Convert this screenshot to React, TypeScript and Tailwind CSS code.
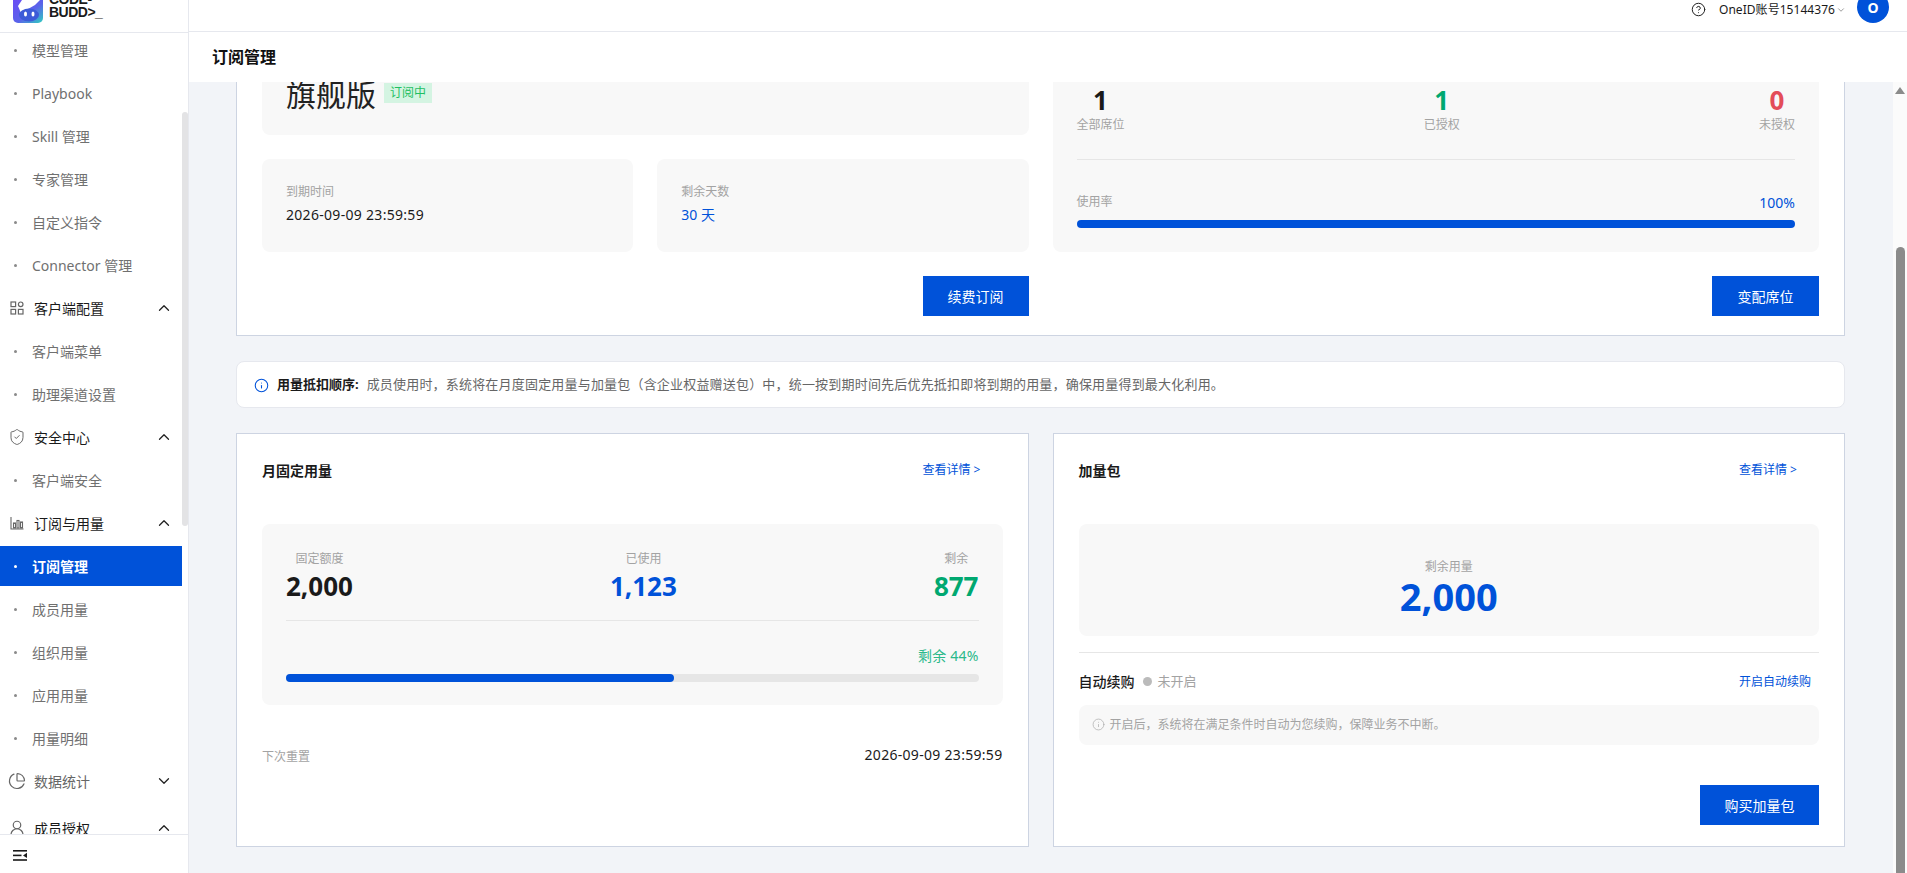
import { ChevronUp, ChevronDown, CircleHelp, Info, ShieldCheck, ChartPie, UserRound } from "lucide-react";
import type { ReactNode } from "react";

function Sub({ label, active }: { label: string; active?: boolean }) {
  return (
    <div className={`h-10 mb-[3px] flex items-center pl-[14px] text-[14px] shrink-0 ${active ? "bg-[#0052d9] text-white font-bold" : "text-[#707070]"}`}>
      <span className={`w-[3px] h-[3px] rounded-full mr-[15px] ${active ? "bg-white" : "bg-[#8a8a8a]"}`} />
      {label}
    </div>
  );
}

function Group({ icon, label, open = true, muted }: { icon: ReactNode; label: string; open?: boolean; muted?: boolean }) {
  return (
    <div className="h-10 mb-[3px] flex items-center pl-[9px] pr-[9px] text-[14px] shrink-0">
      <span className="w-[15px] h-[15px] flex items-center justify-center text-[#666] mr-[10px]">{icon}</span>
      <span className={`flex-1 ${muted ? "text-[#666]" : "text-[#1a1a1a]"}`}>{label}</span>
      {open ? <ChevronUp size={18} strokeWidth={1.7} className="text-[#222]" /> : <ChevronDown size={18} strokeWidth={1.7} className="text-[#222]" />}
    </div>
  );
}

function Panel({ className = "", children }: { className?: string; children: ReactNode }) {
  return <div className={`bg-[#f8f8f8] rounded-lg ${className}`}>{children}</div>;
}

function Primary({ label, w }: { label: string; w: string }) {
  return <button className={`h-10 ${w} bg-[#0052d9] text-white text-[14px]`}>{label}</button>;
}

function SeatStat({ value, label, color }: { value: string; label: string; color: string }) {
  return (
    <div className="flex flex-col items-center">
      <span className={`text-[26px] leading-[32px] font-bold ${color}`}>{value}</span>
      <span className="text-[12px] leading-[18px] text-[#a3a3a3] w-max">{label}</span>
    </div>
  );
}

export default function App() {
  return (
    <div className="w-[1907px] h-[873px] overflow-hidden flex bg-white font-['Noto_Sans','Noto_Sans_CJK_SC',sans-serif] text-[#1a1a1a]">
      <aside className="w-[189px] shrink-0 flex flex-col border-r border-[#e6e8ee] bg-white">
        <div className="h-[33px] shrink-0 border-b border-[#e6e8ee] overflow-hidden flex pl-[13px]">
          <svg width="30" height="23" viewBox="0 0 30 23" className="shrink-0">
            <defs>
              <linearGradient id="lg" x1="0" y1="0" x2="1" y2="1">
                <stop offset="0" stopColor="#6a4cf5" />
                <stop offset="0.55" stopColor="#5a62ea" />
                <stop offset="1" stopColor="#2fd0c0" />
              </linearGradient>
            </defs>
            <path d="M0 0H30V18a5 5 0 0 1-5 5H5a5 5 0 0 1-5-5Z" fill="url(#lg)" />
            <path d="M9 0 L27 0 L22 5 L8 13 L5 6 Z" fill="#fff" />
            <ellipse cx="16" cy="15" rx="10" ry="6.5" fill="#3d5bd8" />
            <ellipse cx="12.5" cy="14" rx="1.5" ry="2.5" fill="#fff" />
            <ellipse cx="20" cy="14" rx="1.5" ry="2.5" fill="#fff" />
          </svg>
          <div className="ml-[6px] -mt-[7px] font-['Liberation_Sans',sans-serif] font-bold text-[14px] leading-[13px] tracking-[-0.5px] text-[#1a1a1a]">
            <div>CODE-</div>
            <div>BUDD&gt;_</div>
          </div>
        </div>
        <div className="flex-1 min-h-0 flex overflow-hidden">
          <nav className="w-[182px] shrink-0 -mt-[3px] flex flex-col">
            <Sub label="模型管理" />
            <Sub label="Playbook" />
            <Sub label="Skill 管理" />
            <Sub label="专家管理" />
            <Sub label="自定义指令" />
            <Sub label="Connector 管理" />
            <Group
              label="客户端配置"
              icon={
                <svg width="14" height="14" viewBox="0 0 14 14" fill="none" stroke="currentColor" strokeWidth="1.2">
                  <rect x="1" y="1" width="4.6" height="4.6" />
                  <rect x="8.4" y="1" width="4.6" height="4.6" rx="2.3" />
                  <rect x="1" y="8.4" width="4.6" height="4.6" />
                  <rect x="8.4" y="8.4" width="4.6" height="4.6" />
                </svg>
              }
            />
            <Sub label="客户端菜单" />
            <Sub label="助理渠道设置" />
            <Group label="安全中心" icon={<ShieldCheck size={18} strokeWidth={1.3} className="shrink-0" />} />
            <Sub label="客户端安全" />
            <Group
              label="订阅与用量"
              icon={
                <svg width="14" height="14" viewBox="0 0 14 14" fill="none" stroke="currentColor" strokeWidth="1.1">
                  <path d="M1 1V13H13.5" />
                  <rect x="3.5" y="7" width="2" height="5" />
                  <rect x="7" y="4.5" width="2" height="7.5" />
                  <rect x="10.5" y="6" width="2" height="6" />
                </svg>
              }
            />
            <Sub label="订阅管理" active />
            <Sub label="成员用量" />
            <Sub label="组织用量" />
            <Sub label="应用用量" />
            <Sub label="用量明细" />
            <Group label="数据统计" open={false} muted icon={<ChartPie size={18} strokeWidth={1.6} className="shrink-0" />} />
            <div className="h-1 shrink-0" />
            <Group label="成员授权" icon={<UserRound size={18} strokeWidth={1.6} className="shrink-0" />} />
          </nav>
          <div className="w-[6px] shrink-0 flex flex-col">
            <div className="h-[79px] shrink-0" />
            <div className="h-[414px] shrink-0 bg-[#e3e3e5] rounded-t-[3px] rounded-b-[3px]" />
          </div>
        </div>
        <div className="h-[39px] shrink-0 border-t border-[#e6e8ee] flex items-center pl-[13px] pt-[2px]">
          <svg width="14" height="11" viewBox="0 0 14 11" fill="#1a1a1a">
            <rect x="0" y="0" width="14" height="1.6" />
            <rect x="0" y="4.6" width="8.5" height="1.6" />
            <rect x="0" y="9.2" width="14" height="1.6" />
            <path d="M14 2.8V8L10 5.4Z" />
          </svg>
        </div>
      </aside>

      <div className="flex-1 min-w-0 flex flex-col">
        <header className="h-[32px] shrink-0 border-b border-[#e6e8ee] flex justify-end overflow-hidden pr-[18px]">
          <div className="flex items-start pt-[2px]">
            <CircleHelp size={15} strokeWidth={1.6} className="text-[#222] mr-[13px]" />
            <span className="text-[12px] leading-[14px] mt-[1px] tracking-[0.05px] text-[#1a1a1a]">OneID账号15144376</span>
            <ChevronDown size={10} className="text-[#888] mt-[3px] ml-[1px]" />
            <div className="w-8 h-8 -mt-[11px] ml-[11px] rounded-full bg-[#0052d9] text-white text-[14px] font-bold flex items-center justify-center">
              O
            </div>
          </div>
        </header>
        <div className="h-[50px] shrink-0 bg-white flex items-center pl-[23px] text-[16px] font-bold text-[#111]">订阅管理</div>

        <div className="flex-1 min-h-0 flex">
          <main className="flex-1 min-w-0 bg-[#f2f4f8] overflow-hidden pl-[47px] pr-[48px]">
            <section className="-mt-[60px] bg-white border border-[#cdd4e2] h-[314px] px-[25px] pt-[25px]">
              <div className="grid grid-cols-2 gap-6 h-[204px]">
                <div className="flex flex-col gap-6">
                  <Panel className="h-[87px] flex items-end px-6 pb-[21px]">
                    <span className="text-[30px] leading-[38px] text-[#222]">旗舰版</span>
                    <span className="ml-2 mb-[11px] h-5 px-[6px] bg-[#d4f4e2] text-[#1fbf62] text-[12px] leading-5">订阅中</span>
                  </Panel>
                  <div className="grid grid-cols-2 gap-6 flex-1">
                    <Panel className="flex flex-col justify-center px-6">
                      <span className="text-[12px] leading-[18px] text-[#a3a3a3]">到期时间</span>
                      <span className="text-[14px] leading-[28px] tracking-[0.3px] text-[#1a1a1a]">2026-09-09 23:59:59</span>
                    </Panel>
                    <Panel className="flex flex-col justify-center px-6">
                      <span className="text-[12px] leading-[18px] text-[#a3a3a3]">剩余天数</span>
                      <span className="text-[14px] leading-[28px] text-[#0052d9]">30 天</span>
                    </Panel>
                  </div>
                </div>
                <Panel className="px-6 pt-[36px] flex flex-col">
                  <div className="flex justify-between pb-[25px] border-b border-[#e6e6e6]">
                    <SeatStat value="1" label="全部席位" color="text-[#1a1a1a]" />
                    <SeatStat value="1" label="已授权" color="text-[#00a870]" />
                    <SeatStat value="0" label="未授权" color="text-[#e34d59]" />
                  </div>
                  <div className="flex justify-between items-center mt-[33px] h-[18px]">
                    <span className="text-[12px] text-[#a3a3a3]">使用率</span>
                    <span className="text-[#0052d9] text-[14px]">100%</span>
                  </div>
                  <div className="h-2 mt-[9px] rounded-full bg-[#0052d9]" />
                </Panel>
              </div>
              <div className="grid grid-cols-2 gap-6 mt-6">
                <div className="flex justify-end"><Primary label="续费订阅" w="w-[106px]" /></div>
                <div className="flex justify-end"><Primary label="变配席位" w="w-[107px]" /></div>
              </div>
            </section>

            <div className="mt-[25px] h-[47px] bg-white border border-[#e6e8ee] rounded-lg flex items-center pl-[17px] pt-[1px] text-[13px]">
              <Info size={15} strokeWidth={1.7} className="text-[#0052d9] mr-[8px]" />
              <span className="font-bold text-[#1a1a1a] mr-[8px]">用量抵扣顺序:</span>
              <span className="tracking-[0.19px] text-[#666]">成员使用时，系统将在月度固定用量与加量包（含企业权益赠送包）中，统一按到期时间先后优先抵扣即将到期的用量，确保用量得到最大化利用。</span>
            </div>

            <div className="mt-[25px] grid grid-cols-2 gap-6 h-[414px]">
              <section className="bg-white border border-[#cdd4e2] px-[25px] pt-[26px]">
                <div className="flex justify-between items-center h-5 pr-[22px]">
                  <span className="text-[14px] font-bold text-[#1a1a1a]">月固定用量</span>
                  <span className="text-[12px] text-[#0052d9]">查看详情 &gt;</span>
                </div>
                <Panel className="mt-[44px] h-[181px] px-6 pt-[26px]">
                  <div className="flex justify-between pb-[16px] border-b border-[#e6e6e6]">
                    <div className="flex flex-col items-center">
                      <span className="text-[12px] leading-[18px] text-[#a3a3a3]">固定额度</span>
                      <span className="text-[26px] leading-[36px] font-bold text-[#1a1a1a]">2,000</span>
                    </div>
                    <div className="flex flex-col items-center">
                      <span className="text-[12px] leading-[18px] text-[#a3a3a3]">已使用</span>
                      <span className="text-[26px] leading-[36px] font-bold text-[#0052d9]">1,123</span>
                    </div>
                    <div className="flex flex-col items-center">
                      <span className="text-[12px] leading-[18px] text-[#a3a3a3]">剩余</span>
                      <span className="text-[26px] leading-[36px] font-bold text-[#00a870]">877</span>
                    </div>
                  </div>
                  <div className="mt-[25px] text-right text-[14px] leading-5 tracking-[0.2px] text-[#2bb98b]">剩余 44%</div>
                  <div className="h-2 mt-[8px] rounded-full bg-[#e6e6e6]">
                    <div className="h-2 w-[56%] rounded-full bg-[#0052d9]" />
                  </div>
                </Panel>
                <div className="mt-[39px] flex justify-between items-center h-5">
                  <span className="text-[12px] pt-[5px] text-[#a3a3a3]">下次重置</span>
                  <span className="text-[14px] tracking-[0.3px] text-[#1a1a1a]">2026-09-09 23:59:59</span>
                </div>
              </section>

              <section className="bg-white border border-[#cdd4e2] px-[25px] pt-[26px]">
                <div className="flex justify-between items-center h-5 pr-[22px]">
                  <span className="text-[14px] font-bold text-[#1a1a1a]">加量包</span>
                  <span className="text-[12px] text-[#0052d9]">查看详情 &gt;</span>
                </div>
                <Panel className="mt-[44px] h-[112px] pt-[15px] flex flex-col items-center justify-center">
                  <span className="text-[12px] leading-[16px] text-[#a3a3a3]">剩余用量</span>
                  <span className="text-[38px] leading-[42px] font-bold text-[#0052d9]">2,000</span>
                </Panel>
                <div className="mt-4 border-t border-[#e6e6e6] h-[53px] pt-[5px] flex items-center pr-2">
                  <span className="text-[14px] font-medium text-[#1a1a1a]">自动续购</span>
                  <span className="w-[9px] h-[9px] rounded-full bg-[#bbb] ml-[8px] mr-[6px]" />
                  <span className="text-[13px] text-[#a3a3a3]">未开启</span>
                  <span className="ml-auto text-[12px] text-[#0052d9]">开启自动续购</span>
                </div>
                <Panel className="h-10 flex items-center pl-[13px] text-[12px] text-[#a3a3a3]">
                  <Info size={13} strokeWidth={1.3} className="text-[#aaa] mr-[5px] -mt-[2px]" />
                  开启后，系统将在满足条件时自动为您续购，保障业务不中断。
                </Panel>
                <div className="mt-10 flex justify-end"><Primary label="购买加量包" w="w-[119px]" /></div>
              </section>
            </div>
          </main>
          <div className="w-[14px] shrink-0 bg-[#fbfbfb] flex flex-col items-center">
            <div className="mt-[5px] w-0 h-0 border-l-[5px] border-r-[5px] border-b-[7px] border-l-transparent border-r-transparent border-b-[#8b8b8b]" />
            <div className="mt-[153px] w-[9px] flex-1 bg-[#8b8b8b] rounded-t-[5px]" />
          </div>
        </div>
      </div>
    </div>
  );
}
